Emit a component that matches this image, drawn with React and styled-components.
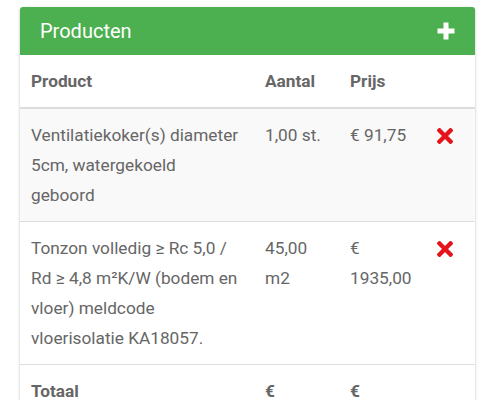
import React from "react";
import styled, { createGlobalStyle } from "styled-components";

const Global = createGlobalStyle`
  html, body { margin: 0; padding: 0; background: #fff; }
  body { font-family: Roboto, "Noto Sans", Arial, sans-serif; }
`;

const Page = styled.div`
  padding: 7px 20px 20px 20px;
`;

const Card = styled.div`
  background: #fff;
  border-radius: 3px;
  box-shadow: 0 1px 3px rgba(0, 0, 0, 0.25);
  overflow: hidden;
`;

const Header = styled.div`
  display: flex;
  align-items: center;
  justify-content: space-between;
  height: 48px;
  padding: 0 20px;
  background: #4caf50;
  color: #fff;
`;

const Title = styled.h2`
  margin: 0;
  font-size: 20px;
  font-weight: 400;
`;

const AddButton = styled.button`
  border: 0;
  background: transparent;
  padding: 0;
  display: flex;
  cursor: pointer;
`;

const Row = styled.div`
  display: grid;
  grid-template-columns: 234px 85px 86px 1fr;
  background: ${(p) => (p.$striped ? "#f9f9f9" : "#fff")};
  border-bottom: ${(p) => (p.$head ? "2px" : "1px")} solid #dddddd;
`;

const Cell = styled.div`
  padding: 11px 13px 11px 11px;
  font-size: 17.25px;
  line-height: 30px;
  color: #666;
  font-weight: ${(p) => (p.$bold ? 700 : 400)};
`;

const IconCell = styled.div`
  padding: 19px 0 0 12px;
`;

const RemoveButton = styled.button`
  border: 0;
  background: transparent;
  padding: 0;
  display: flex;
  cursor: pointer;
`;

const Plus = () => (
  <svg width="18" height="18" viewBox="0 0 18 18">
    <path d="M6.5 0.5h5v6h6v5h-6v6h-5v-6h-6v-5h6z" fill="#fff" />
  </svg>
);

const Cross = () => (
  <svg width="16" height="16" viewBox="0 0 16 16">
    <path
      d="M2.5 2.5L13.5 13.5M13.5 2.5L2.5 13.5"
      stroke="#e5141c"
      strokeWidth="4.4"
      strokeLinecap="square"
    />
  </svg>
);

const items = [
  {
    name: "Ventilatiekoker(s) diameter 5cm, watergekoeld geboord",
    qty: "1,00 st.",
    price: "€ 91,75",
  },
  {
    name: "Tonzon volledig ≥ Rc 5,0 / Rd ≥ 4,8 m²K/W (bodem en vloer) meldcode vloerisolatie KA18057.",
    qty: "45,00 m2",
    price: "€ 1935,00",
  },
];

export default function App() {
  return (
    <Page>
      <Global />
      <Card>
        <Header>
          <Title>Producten</Title>
          <AddButton aria-label="Toevoegen">
            <Plus />
          </AddButton>
        </Header>
        <Row $head>
          <Cell $bold>Product</Cell>
          <Cell $bold>Aantal</Cell>
          <Cell $bold>Prijs</Cell>
          <Cell />
        </Row>
        {items.map((it, i) => (
          <Row key={i} $striped={i % 2 === 0}>
            <Cell>{it.name}</Cell>
            <Cell>{it.qty}</Cell>
            <Cell>{it.price}</Cell>
            <IconCell>
              <RemoveButton aria-label="Verwijderen">
                <Cross />
              </RemoveButton>
            </IconCell>
          </Row>
        ))}
        <Row>
          <Cell $bold>Totaal</Cell>
          <Cell $bold>€ 2026,75</Cell>
          <Cell $bold>€ 2026,75</Cell>
          <Cell />
        </Row>
      </Card>
    </Page>
  );
}
